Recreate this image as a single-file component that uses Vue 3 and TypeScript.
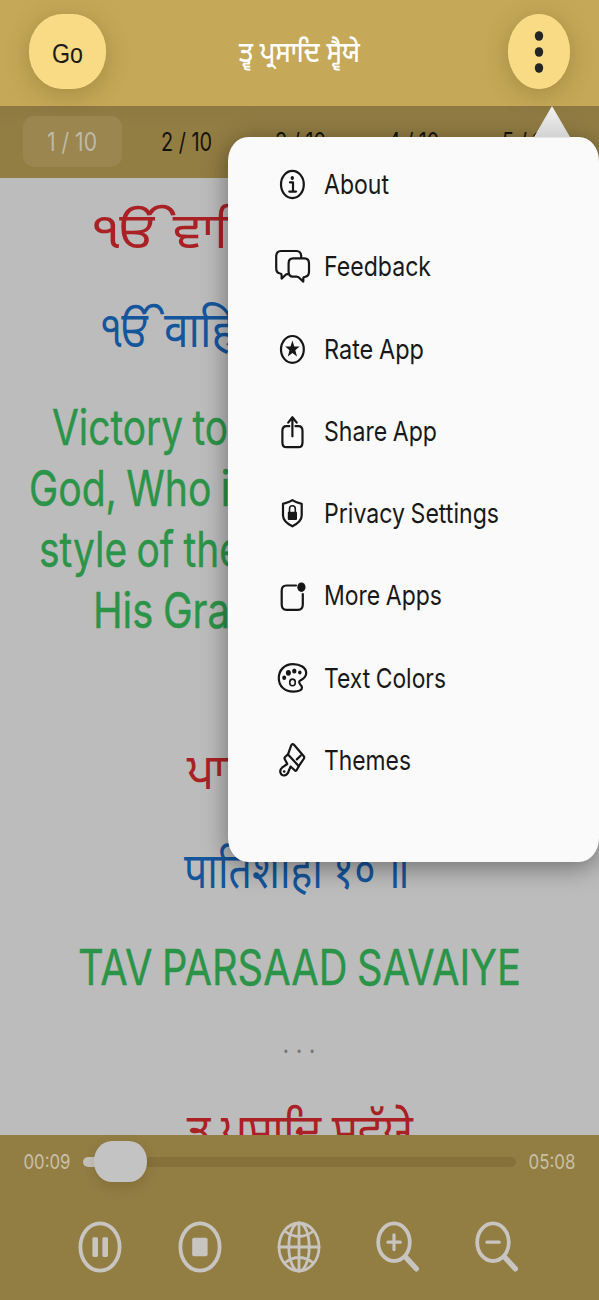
<script setup lang="ts">
interface Run { text: string; x: number; width: number }
interface Verse { tone: string; height: number; baseline: number; runs: Run[] }
interface Tab { text: string; width: number; active?: boolean }
interface MenuItem { id: string; label: string; width: number }

const tabs: Tab[] = [
  { text: '1 / 10', width: 50, active: true },
  { text: '2 / 10', width: 51 },
  { text: '3 / 10', width: 51 },
  { text: '4 / 10', width: 51 },
  { text: '5 / 10', width: 51 },
]

const verses: Verse[] = [
  { tone: 'red', height: 102, baseline: 70, runs: [{ text: 'ੴ', x: 91, width: 82 }, { text: 'ਵਾਹਿ', x: 173, width: 84 }] },
  { tone: 'blue', height: 110, baseline: 67, runs: [{ text: 'ੴ', x: 100, width: 62 }, { text: 'वाहि', x: 164, width: 71 }] },
  { tone: 'green', height: 61, baseline: 55, runs: [{ text: 'Victory to', x: 52, width: 176 }] },
  { tone: 'green', height: 61, baseline: 55, runs: [{ text: 'God, Who is', x: 29, width: 222 }] },
  { tone: 'green', height: 61, baseline: 55, runs: [{ text: 'style of the', x: 39, width: 203 }] },
  { tone: 'green', height: 61, baseline: 55, runs: [{ text: 'His Grace', x: 93, width: 183 }] },
  { tone: 'red', height: 196, baseline: 155, runs: [{ text: 'ਪਾਤਿ', x: 187, width: 74 }] },
  { tone: 'blue', height: 100, baseline: 58, runs: [{ text: 'पातिशाही १० ॥', x: 184, width: 226 }] },
  { tone: 'green', height: 90, baseline: 55, runs: [{ text: 'TAV PARSAAD SAVAIYE', x: 78, width: 443 }] },
  { tone: 'dots', height: 60, baseline: 33, runs: [{ text: '. . .', x: 282.5, width: 33 }] },
  { tone: 'red', height: 100, baseline: 69, runs: [{ text: 'ਤ੍ਵ ਪ੍ਰਸਾਦਿ ਸਵੱਯੇ', x: 187, width: 226 }] },
]

const items: MenuItem[] = [
  { id: 'about', label: 'About', width: 65 },
  { id: 'feedback', label: 'Feedback', width: 107 },
  { id: 'rate', label: 'Rate App', width: 100 },
  { id: 'share', label: 'Share App', width: 113 },
  { id: 'privacy', label: 'Privacy Settings', width: 175 },
  { id: 'more', label: 'More Apps', width: 118 },
  { id: 'colors', label: 'Text Colors', width: 122 },
  { id: 'themes', label: 'Themes', width: 87 },
]

const controls = ['pause', 'stop', 'globe', 'zoomin', 'zoomout']
</script>

<template>
  <div class="app">
    <header class="top">
      <button class="go">
        <svg width="31" height="32"><text x="0" y="26.5" textLength="31" lengthAdjust="spacingAndGlyphs">Go</text></svg>
      </button>
      <svg class="title" width="121" height="60">
        <text x="0" y="43" textLength="121" lengthAdjust="spacingAndGlyphs">ਤ੍ਵ ਪ੍ਰਸਾਦਿ ਸ੍ਵੈਯੇ</text>
      </svg>
      <button class="more">
        <svg width="10" height="44">
          <ellipse cx="5" cy="6" rx="4.2" ry="4.8" />
          <ellipse cx="5" cy="22" rx="4.2" ry="4.8" />
          <ellipse cx="5" cy="38" rx="4.2" ry="4.8" />
        </svg>
      </button>
    </header>

    <nav class="tabs">
      <div v-for="t in tabs" :key="t.text" class="tab" :class="{ active: t.active }">
        <svg :width="t.width" height="30">
          <text x="0" y="24" :textLength="t.width" lengthAdjust="spacingAndGlyphs">{{ t.text }}</text>
        </svg>
      </div>
    </nav>

    <main class="content">
      <svg v-for="(v, i) in verses" :key="i" class="verse" :class="v.tone" width="599" :height="v.height">
        <text
          v-for="r in v.runs"
          :key="r.text"
          :x="r.x"
          :y="v.baseline"
          :textLength="r.width"
          lengthAdjust="spacingAndGlyphs"
        >{{ r.text }}</text>
      </svg>
    </main>

    <footer class="player">
      <div class="seek">
        <svg width="47" height="24"><text x="-0.5" y="20" textLength="47" lengthAdjust="spacingAndGlyphs">00:09</text></svg>
        <div class="track"><div class="fill"></div><div class="thumb"></div></div>
        <svg width="47" height="24"><text x="-0.5" y="20" textLength="47" lengthAdjust="spacingAndGlyphs">05:08</text></svg>
      </div>
      <div class="controls">
        <svg v-for="c in controls" :key="c" width="50" height="56" viewBox="0 0 50 56">
          <g v-if="c === 'pause'">
            <ellipse cx="25" cy="28" rx="19.6" ry="23.6" />
            <rect class="solid" x="17.4" y="18.3" width="5.6" height="19.6" rx="1.4" />
            <rect class="solid" x="27.4" y="18.3" width="5.6" height="19.6" rx="1.4" />
          </g>
          <g v-else-if="c === 'stop'">
            <ellipse cx="25" cy="28" rx="19.6" ry="23.6" />
            <rect class="solid" x="17.2" y="18.8" width="15.4" height="18.4" rx="1.8" />
          </g>
          <g v-else-if="c === 'globe'" class="thin">
            <ellipse cx="25" cy="28" rx="20" ry="24" />
            <ellipse cx="25" cy="28" rx="10.2" ry="24" />
            <path d="M25 4V52M5 28H45M10.5 12Q25 23 39.5 12M10.5 44Q25 33 39.5 44" />
          </g>
          <g v-else>
            <ellipse cx="21" cy="23.2" rx="15.8" ry="18.8" />
            <path class="handle" d="M33 38.5L43.3 49.8" />
            <path d="M15 23.2H27.2" class="sign" />
            <path v-if="c === 'zoomin'" d="M21 15.8V30.6" class="sign" />
          </g>
        </svg>
      </div>
    </footer>

    <aside class="popover">
      <svg class="arrow" width="38" height="32">
        <defs>
          <linearGradient id="tip" x1="0" y1="0" x2="0" y2="1">
            <stop offset="0" stop-color="#f4f4f4" />
            <stop offset="1" stop-color="#d2d2d2" />
          </linearGradient>
        </defs>
        <path d="M19 0L37.3 31.5H.7Z" fill="url(#tip)" />
      </svg>
      <ul class="menu">
        <li v-for="m in items" :key="m.id">
          <svg class="icon" width="48" height="48" viewBox="0 0 48 48">
            <g v-if="m.id === 'about'">
              <ellipse cx="24.4" cy="23.5" rx="11.4" ry="13.6" />
              <ellipse class="solid" cx="24.3" cy="17" rx="1.7" ry="1.9" />
              <path d="M22 21.4H25V30M21.3 30.6H28" />
            </g>
            <g v-else-if="m.id === 'feedback'">
              <path d="M33.2 14.8V13.5Q33.2 8 28.4 8H13Q8.2 8 8.2 13.5V25Q8.2 30.2 12.3 30.5Q13.6 30.6 13.6 32V35.6L18.3 31.3L20.8 30.8" />
              <path d="M25 15.4H36.4Q41 15.4 41 20.6V28.5Q41 33.3 37 33.8Q35.3 33.8 35.3 35.2V38.6L30.6 34.3L29 33.7H25Q20.6 33.7 20.6 28.5V20.6Q20.6 15.4 25 15.4Z" />
            </g>
            <g v-else-if="m.id === 'rate'">
              <ellipse cx="24.4" cy="23.4" rx="11.4" ry="13.4" />
              <path class="solid" d="M24.4 14.6L26.3 20.5H31.6L27.3 24.3L29 30.6L24.4 26.9L19.8 30.6L21.5 24.3L17.2 20.5H22.5Z" />
            </g>
            <g v-else-if="m.id === 'share'">
              <path d="M21.3 18.2H18.5Q14.4 18.2 14.4 23V34.4Q14.4 39.2 18.5 39.2H30.4Q34.5 39.2 34.5 34.4V23Q34.5 18.2 30.4 18.2H27.5" />
              <path d="M24.4 28.3V9.3M20.2 14.6L24.4 9.3L28.7 14.6" />
            </g>
            <g v-else-if="m.id === 'privacy'">
              <path d="M24.4 10.2Q28.5 13 33.7 13.9V25.5Q33.7 31.5 24.4 36.3Q15 31.5 15 25.5V13.9Q20.3 13 24.4 10.2Z" />
              <rect class="solid" x="19.8" y="21.8" width="9.2" height="8.2" rx="1" />
              <path class="fine" d="M21.5 22V19Q21.5 15.8 24.4 15.8Q27.3 15.8 27.3 19V22" />
            </g>
            <g v-else-if="m.id === 'more'">
              <path d="M28 13.5H18.5Q13.7 13.5 13.7 18.8V32.6Q13.7 37.9 18.5 37.9H30Q34.8 37.9 34.8 32.6V22" />
              <ellipse class="solid" cx="33.4" cy="15.2" rx="4.1" ry="4.8" />
            </g>
            <g v-else-if="m.id === 'colors'">
              <path d="M31.3 26.3C32.4 24.7 38.2 24 38.2 18C38.2 12.5 32 9.2 25 9.2C16.5 9.2 10.8 15 10.8 23.2C10.8 31.5 17 36.6 25.4 36.6C30 36.6 34 35.3 34 32.6C34 30 30 29 31.3 26.3Z" />
              <ellipse class="fine" cx="24.5" cy="27.4" rx="2.8" ry="3.3" />
              <ellipse class="solid" cx="16.2" cy="22.8" rx="2" ry="2.3" />
              <ellipse class="solid" cx="20.4" cy="17.8" rx="2.5" ry="2.9" />
              <ellipse class="solid" cx="26.3" cy="15.9" rx="2.2" ry="2.5" />
              <ellipse class="solid" cx="31.8" cy="17.4" rx="1.7" ry="2" />
            </g>
            <g v-else>
              <path d="M20 17.4L23.3 8.2Q24.4 6.3 26.2 8L35.8 19.2Q36.8 20.5 35.6 22L30.8 29.2" />
              <path d="M20 17.4L30.8 29.2L28.4 33.5Q27.6 34.2 26.7 33.3L22.6 29.5L19.9 36Q16.8 40.2 13.3 37.4Q10.8 33.6 14 30.7L19.3 27L16.6 21.8Q16.2 20.7 17 20Z" />
              <path d="M32.8 18.5L28.8 22.4" />
              <circle class="solid" cx="16.2" cy="34.5" r="1.3" />
            </g>
          </svg>
          <svg class="label" :width="m.width" height="48">
            <text x="0" y="33.3" :textLength="m.width" lengthAdjust="spacingAndGlyphs">{{ m.label }}</text>
          </svg>
        </li>
      </ul>
    </aside>
  </div>
</template>

<style>
body { margin: 0; background: #bcbcbc; }
</style>

<style scoped>
.app {
  position: relative;
  display: flex;
  flex-direction: column;
  width: 599px;
  height: 1300px;
  overflow: hidden;
  background: #bcbcbc;
  font-family: Inter, "Noto Sans", "Noto Sans Gurmukhi", "Noto Sans Devanagari", sans-serif;
}
svg { display: block; flex: none; overflow: visible; }
button { border: 0; padding: 0; display: flex; align-items: center; justify-content: center; }
.top {
  position: relative;
  z-index: 1;
  box-sizing: border-box;
  height: 106px;
  flex: none;
  padding: 0 29px 0 28.5px;
  display: flex;
  justify-content: space-between;
  align-items: center;
  background: #c5a858;
}
.go, .more {
  width: 77px;
  height: 75px;
  margin-bottom: 3px;
  background: #f9da85;
  border-radius: 34px / 37px;
  box-shadow: 0 5px 24px rgba(90, 70, 15, .3), inset 0 0 2px #ffe694;
}
.more { width: 62px; border-radius: 50%; }
.go svg { font-size: 27px; fill: #1c1a14; }
.more svg { fill: #242424; }
.title { font-size: 28px; font-weight: 500; fill: #fff; margin-bottom: 8px; margin-left: 13px; margin-right: 28px; }
.tabs {
  box-sizing: border-box;
  display: flex;
  gap: 14.4px;
  align-items: center;
  flex: none;
  height: 72px;
  padding: 0 0 1px 22.5px;
  background: linear-gradient(#8e7942, #927d43 20px);
  font-size: 25px;
  fill: #14120c;
}
.tab { flex: none; width: 99.5px; height: 51px; border-radius: 11px; display: flex; align-items: center; justify-content: center; }
.active { background: #9a864e; fill: #bfb9a9; }
.content { height: 957px; flex: none; overflow: hidden; }
.verse { font-size: 49px; word-spacing: -2px; }
.red { fill: #a92125; }
.blue { fill: #14559c; }
.green { fill: #2b9448; stroke: #2b9448; stroke-width: .4; }
.dots { fill: #777; font-size: 27px; word-spacing: 0; }
.player { flex: 1; background: #927d43; }
.seek { display: flex; align-items: center; gap: 12.5px; padding: 14px 0 0 23.5px; font-size: 20px; fill: #c9c0a8; }
.track { position: relative; width: 433px; height: 10px; border-radius: 5px; background: #86713b; margin-top: 1px; }
.fill { width: 40px; height: 10px; border-radius: 5px; background: #c4c1bb; }
.thumb {
  position: absolute;
  left: 11px;
  top: -15.5px;
  width: 52.5px;
  height: 41px;
  border-radius: 18px / 20px;
  background: #c3c3c3;
  box-shadow: 0 4px 12px rgba(60, 45, 5, .16);
}
.controls { display: flex; gap: 49.3px; padding: 46px 0 0 75.3px; }
.controls svg { fill: none; stroke: #c8c5c0; stroke-width: 3.8; stroke-linecap: round; }
.controls .solid { fill: #c8c5c0; stroke: none; }
.controls .thin { stroke-width: 2.8; }
.controls .handle { stroke-width: 5.4; }
.controls .sign { stroke-width: 3.2; }
.popover { position: absolute; left: 228px; top: 106px; width: 371px; }
.arrow { margin-left: 305px; position: relative; }
.menu {
  box-sizing: border-box;
  list-style: none;
  margin: -1px 0 0;
  padding: 6.9px 0 0 40px;
  height: 725px;
  background: #fafafa;
  border-radius: 20px / 24px;
  box-shadow: 0 5px 26px rgba(0, 0, 0, .42);
}
.menu li { display: flex; align-items: center; gap: 7.5px; height: 82.25px; }
.icon { fill: none; stroke: #161616; stroke-width: 2.2; stroke-linecap: round; stroke-linejoin: round; }
.icon .solid { fill: #161616; stroke: none; }
.icon .fine { stroke-width: 1.6; }
.label { font-size: 27.5px; fill: #181818; word-spacing: -1px; }
</style>
